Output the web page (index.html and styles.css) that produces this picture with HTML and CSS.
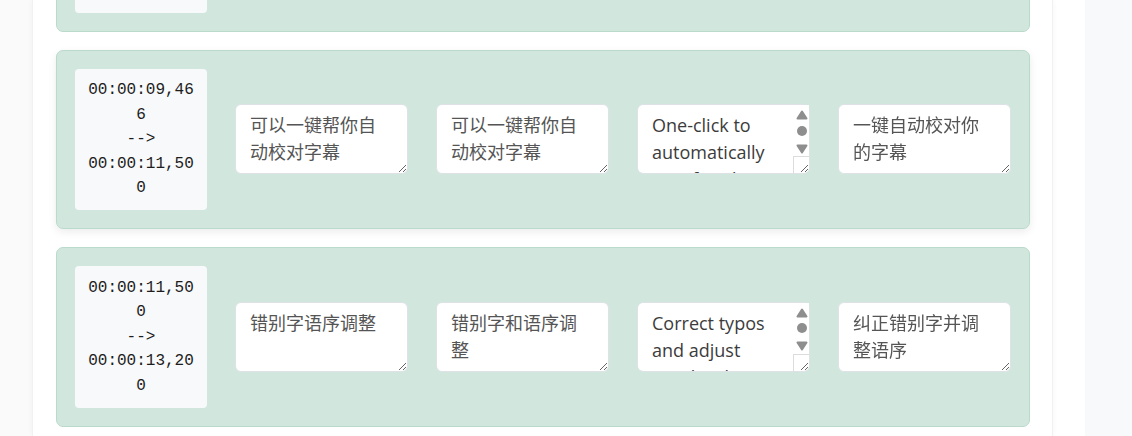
FILE: index.html
```html
<!DOCTYPE html>
<html lang="zh-CN">
<head>
    <meta charset="UTF-8">
    <meta name="viewport" content="width=device-width, initial-scale=1.0">
    <title>字幕校对</title>
    <link rel="stylesheet" href="styles.css">
</head>
<body>
    <div class="layout">
        <main class="main">
            <div class="panel">
                <div class="subtitle-list">
                    <div class="subtitle-row">
                        <div class="timecode"><span>00:00:07,120</span><span>--></span><span>00:00:09,466</span></div>
                        <div class="field"><textarea class="line-edit" rows="2">只需要上传字幕文件</textarea></div>
                        <div class="field"><textarea class="line-edit" rows="2">只需要上传字幕文件</textarea></div>
                        <div class="field"><textarea class="line-edit" rows="2">Just upload the subtitle file</textarea></div>
                        <div class="field"><textarea class="line-edit" rows="2">只需上传字幕文件</textarea></div>
                    </div>
                    <div class="subtitle-row active">
                        <div class="timecode"><span>00:00:09,466</span><span>--></span><span>00:00:11,500</span></div>
                        <div class="field"><textarea class="line-edit" rows="2">可以一键帮你自动校对字幕</textarea></div>
                        <div class="field"><textarea class="line-edit" rows="2">可以一键帮你自动校对字幕</textarea></div>
                        <div class="field scrolling">
                            <textarea class="line-edit" rows="2">One-click to automatically proofread your subtitles</textarea>
                            <span class="scrollbar">
                                <span class="sb-btn"><svg width="12" height="10" viewBox="0 0 12 10"><path d="M1.5 8.5 L6 1.5 L10.5 8.5 Z" fill="#8e8e8e" stroke="#8e8e8e" stroke-width="2" stroke-linejoin="round"/></svg></span>
                                <span class="sb-track"><span class="sb-thumb"></span></span>
                                <span class="sb-btn"><svg width="12" height="10" viewBox="0 0 12 10"><path d="M1.5 1.5 L6 8.5 L10.5 1.5 Z" fill="#8e8e8e" stroke="#8e8e8e" stroke-width="2" stroke-linejoin="round"/></svg></span>
                                <span class="sb-corner"></span>
                            </span>
                        </div>
                        <div class="field"><textarea class="line-edit" rows="2">一键自动校对你的字幕</textarea></div>
                    </div>
                    <div class="subtitle-row">
                        <div class="timecode"><span>00:00:11,500</span><span>--></span><span>00:00:13,200</span></div>
                        <div class="field"><textarea class="line-edit" rows="2">错别字语序调整</textarea></div>
                        <div class="field"><textarea class="line-edit" rows="2">错别字和语序调整</textarea></div>
                        <div class="field scrolling">
                            <textarea class="line-edit" rows="2">Correct typos and adjust word order</textarea>
                            <span class="scrollbar">
                                <span class="sb-btn"><svg width="12" height="10" viewBox="0 0 12 10"><path d="M1.5 8.5 L6 1.5 L10.5 8.5 Z" fill="#8e8e8e" stroke="#8e8e8e" stroke-width="2" stroke-linejoin="round"/></svg></span>
                                <span class="sb-track"><span class="sb-thumb"></span></span>
                                <span class="sb-btn"><svg width="12" height="10" viewBox="0 0 12 10"><path d="M1.5 1.5 L6 8.5 L10.5 1.5 Z" fill="#8e8e8e" stroke="#8e8e8e" stroke-width="2" stroke-linejoin="round"/></svg></span>
                                <span class="sb-corner"></span>
                            </span>
                        </div>
                        <div class="field"><textarea class="line-edit" rows="2">纠正错别字并调整语序</textarea></div>
                    </div>
                </div>
            </div>
        </main>
        <aside class="sidebar"></aside>
    </div>
</body>
</html>
```

FILE: styles.css
```css
html, body {
    margin: 0;
    padding: 0;
    height: 100%;
    background: #fff;
    overflow: hidden;
}

.layout {
    display: flex;
    height: 100vh;
}

.main {
    width: 1085px;
    padding-left: 32px;
    box-sizing: border-box;
    background: linear-gradient(to right, #fafafa 32px, #fff 32px);
}

.panel {
    display: flex;
    flex-direction: column;
    width: 1021px;
    height: 100%;
    box-sizing: border-box;
    padding: 0 22px 0 23px;
    background: #fff;
    border-left: 1px solid #f1f1f1;
    border-right: 1px solid #f1f1f1;
    box-shadow: 0 0 6px rgba(0, 0, 0, 0.04);
}

.sidebar {
    flex: 1;
    background: #f8f9fa;
}

/* subtitle rows */
.subtitle-list {
    display: flex;
    flex-direction: column;
    gap: 18px;
    margin-top: -148px;
}

.subtitle-row {
    display: flex;
    align-items: center;
    gap: 28px;
    padding: 18px;
    background: #d1e7dd;
    border: 1px solid #badbcc;
    border-radius: 7px;
}

.subtitle-row.active {
    box-shadow: 0 3px 8px rgba(0, 0, 0, 0.08);
}

.timecode {
    display: flex;
    flex-direction: column;
    flex: 0 0 132px;
    box-sizing: border-box;
    padding: 9.5px 10px;
    background: #f8f9fa;
    border-radius: 4px;
    color: #1d1d1d;
    font-family: "Liberation Mono", "Courier New", monospace;
    font-size: 16px;
    line-height: 24.5px;
    text-align: center;
    overflow-wrap: anywhere;
}

.field {
    position: relative;
    display: flex;
    flex: 1;
    min-width: 0;
}

.line-edit {
    flex: 1;
    min-width: 0;
    height: 70px;
    box-sizing: border-box;
    margin: 0;
    padding: 7px 14px;
    background: #fff;
    border: 1px solid #dee2e6;
    border-radius: 6px;
    color: #555;
    font-family: "Open Sans", "Noto Sans CJK SC", sans-serif;
    font-size: 18px;
    line-height: 27px;
    outline: none;
}

.scrolling .line-edit {
    padding-right: 29px;
    color: #3c3c3c;
}

/* scrollbar drawn over the textarea edge */
.scrollbar {
    position: absolute;
    top: 1px;
    right: 1px;
    bottom: 1px;
    width: 15px;
    display: flex;
    flex-direction: column;
    pointer-events: none;
}

.sb-btn {
    height: 15px;
    display: flex;
    align-items: center;
    justify-content: center;
    background: #fff;
}

.sb-btn:first-child {
    align-items: flex-end;
}

.sb-track {
    flex: 1;
    display: flex;
    align-items: center;
    justify-content: center;
    background: #fff;
}

.sb-thumb {
    width: 10px;
    height: 10px;
    border-radius: 50%;
    background: #8e8e8e;
}

.sb-corner {
    height: 16px;
    margin-left: -1px;
    border-left: 1px solid #dcdcdc;
    border-top: 1px solid #dcdcdc;
}
```
